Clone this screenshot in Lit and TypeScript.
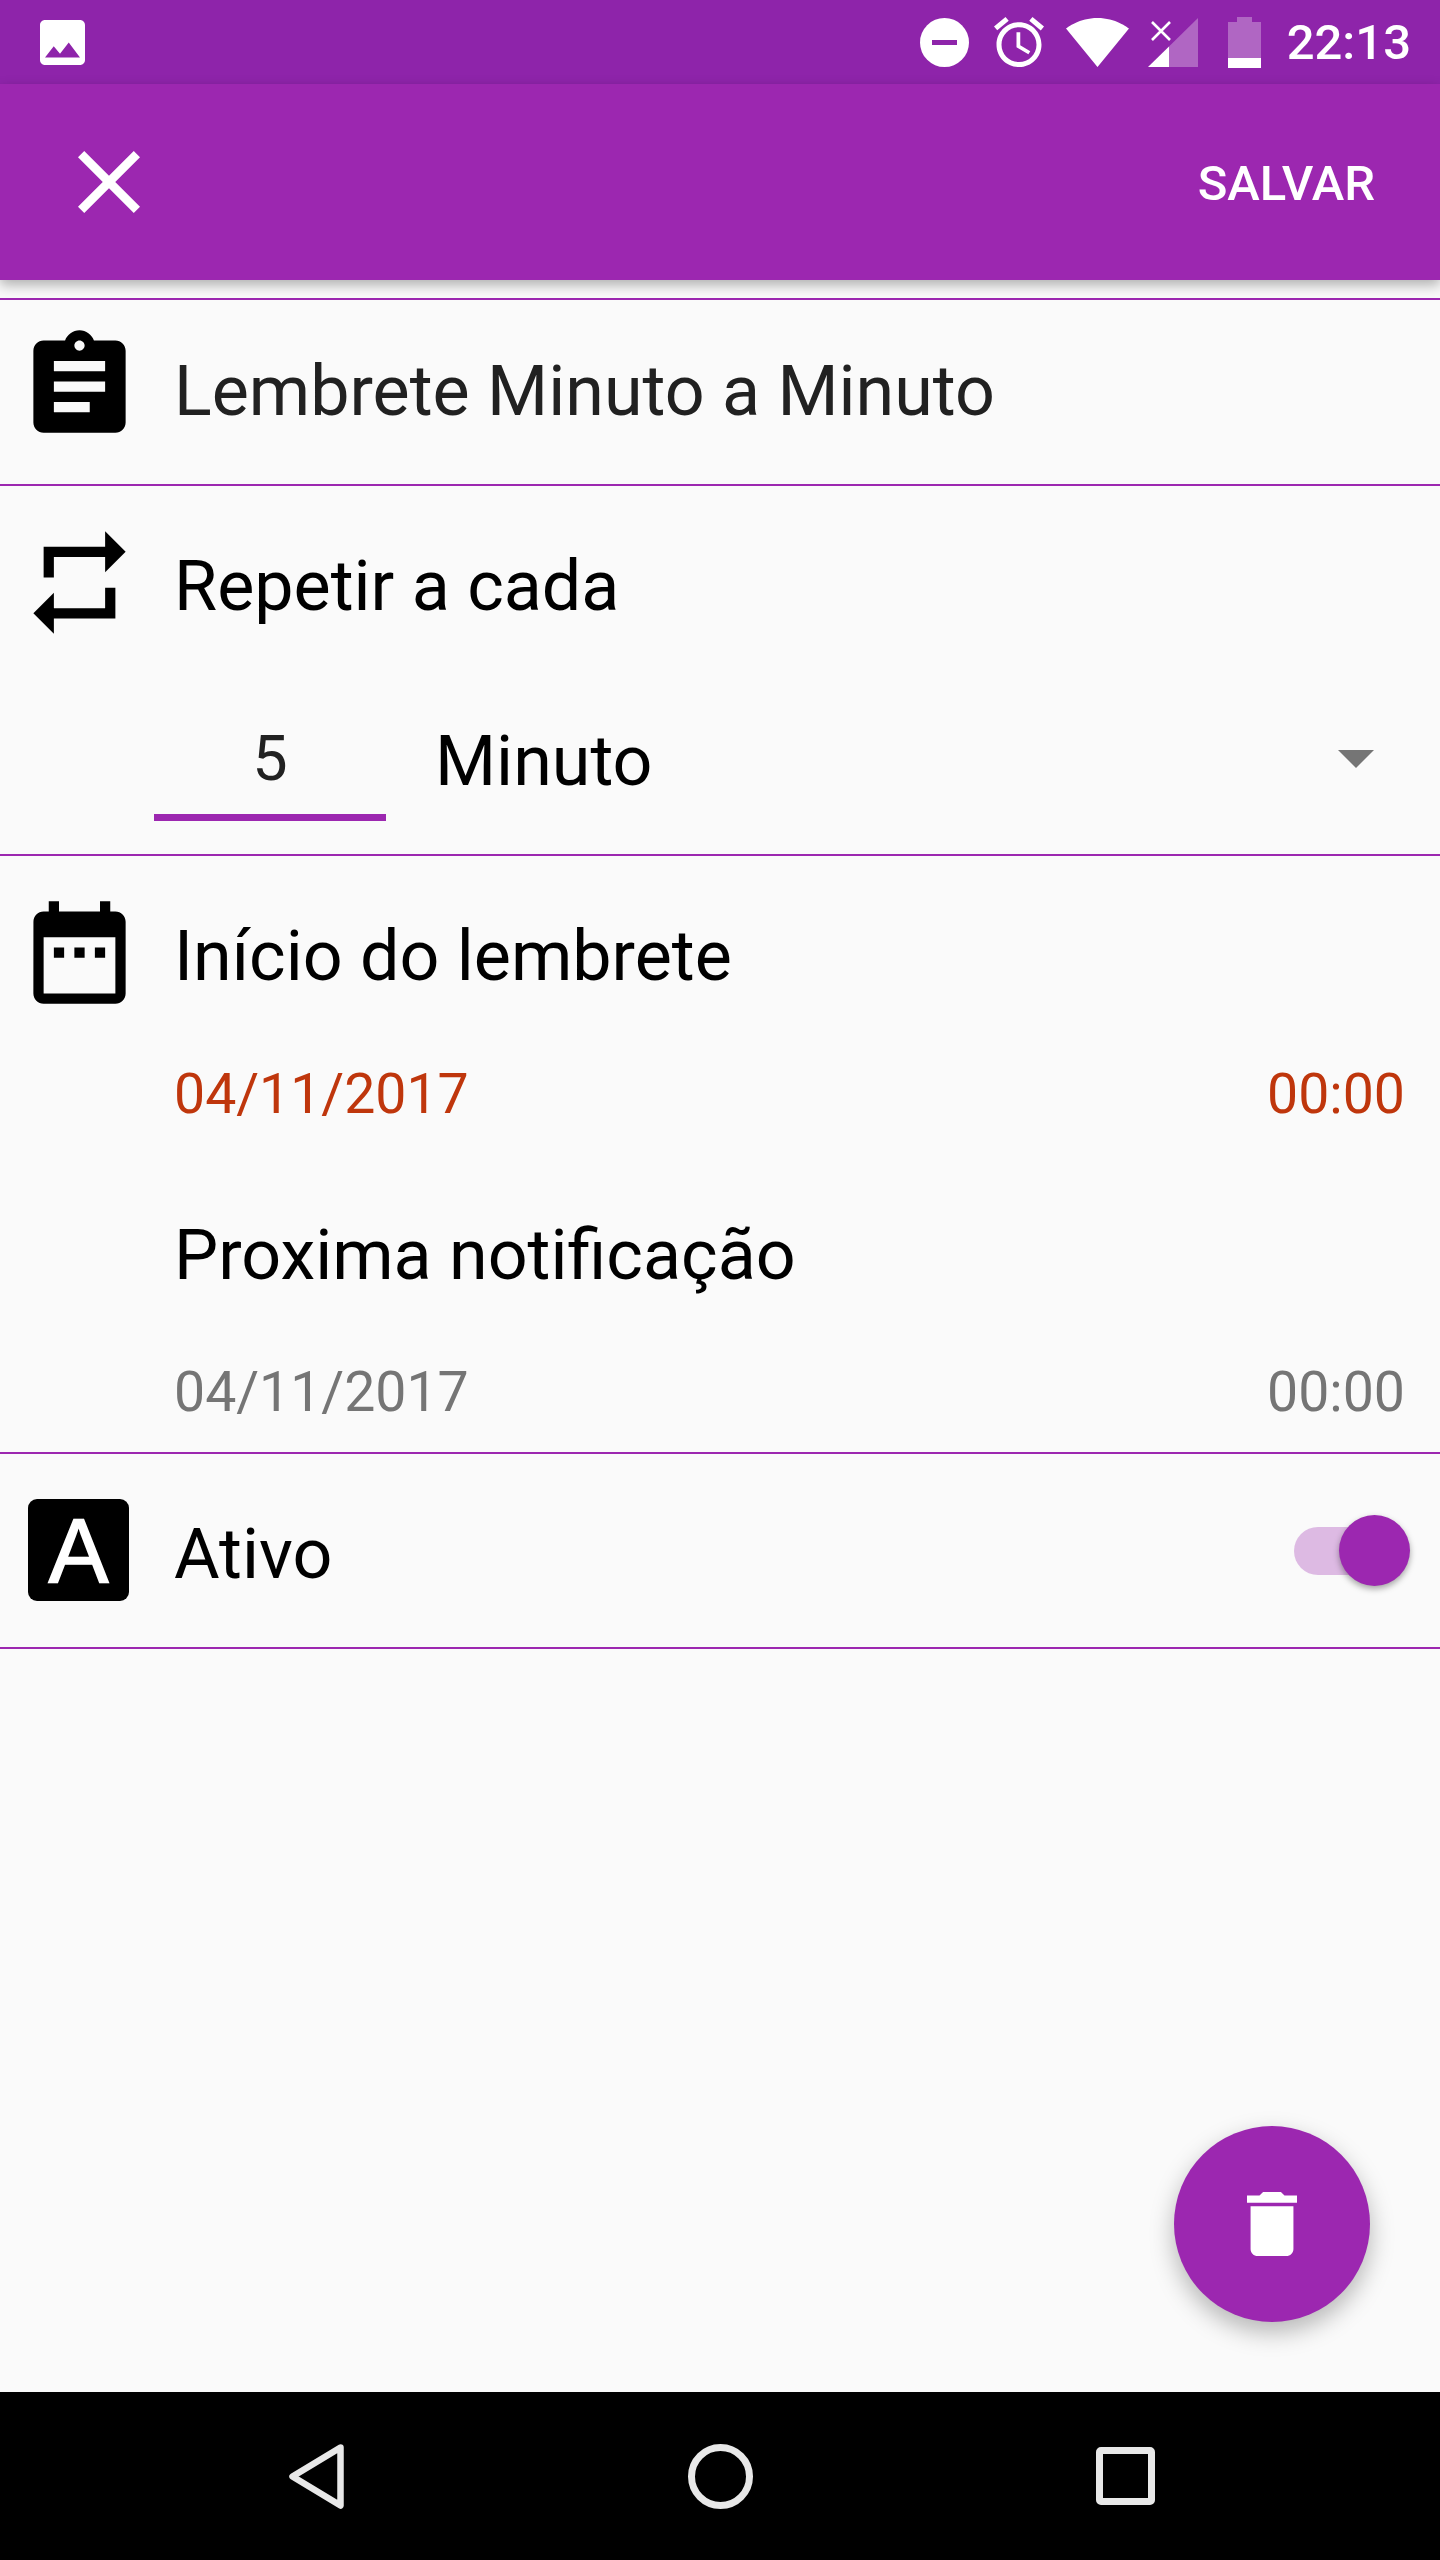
import { LitElement, css, html, svg } from 'lit'
import { customElement } from 'lit/decorators.js'

const icon = (d: string, viewBox: string, w: number, h: number, cls = '') => html`
  <svg class=${cls} width=${w} height=${h} viewBox=${viewBox} preserveAspectRatio="none" fill="currentColor">
    ${svg`<path fill-rule="evenodd" d=${d}></path>`}
  </svg>`

const ASSIGNMENT = 'M19 3h-4.18C14.4 1.84 13.3 1 12 1c-1.3 0-2.4.84-2.82 2H5c-1.1 0-2 .9-2 2v14c0 1.1.9 2 2 2h14c1.1 0 2-.9 2-2V5c0-1.1-.9-2-2-2zm-7 0c.55 0 1 .45 1 1s-.45 1-1 1-1-.45-1-1 .45-1 1-1zm2 14H7v-2h7v2zm3-4H7v-2h10v2zm0-4H7V7h10v2z'
const REPEAT = 'M7 7h10v3l4-4-4-4v3H5v6h2V7zm10 10H7v-3l-4 4 4 4v-3h12v-6h-2v4z'
const CALENDAR = 'M9 11H7v2h2v-2zm4 0h-2v2h2v-2zm4 0h-2v2h2v-2zm2-7h-1V2h-2v2H8V2H6v2H5c-1.11 0-1.99.9-1.99 2L3 20c0 1.1.89 2 2 2h14c1.1 0 2-.9 2-2V6c0-1.1-.9-2-2-2zm0 16H5V9h14v11z'
const IMAGE = 'M21 19V5c0-1.1-.9-2-2-2H5c-1.1 0-2 .9-2 2v14c0 1.1.9 2 2 2h14c1.1 0 2-.9 2-2zM8.5 13.5l2.5 3.01L14.5 12l4.5 6H5l3.5-4.5z'
const ALARM = 'M22 5.72l-4.6-3.86-1.29 1.53 4.6 3.86L22 5.72zM7.88 3.39L6.6 1.86 2 5.71l1.29 1.53 4.59-3.85zM12.5 8H11v6l4.75 2.85.75-1.23-4-2.37V8zM12 4c-4.97 0-9 4.03-9 9s4.03 9 9 9 9-4.03 9-9-4.03-9-9-9zm0 16c-3.87 0-7-3.13-7-7s3.13-7 7-7 7 3.13 7 7-3.13 7-7 7z'
const WIFI = 'M12.01 21.49L23.64 7c-.45-.34-4.93-4-11.64-4C5.28 3 .81 6.66.36 7l11.63 14.49.01.01.01-.01z'
const CLOSE = 'M19 6.41L17.59 5 12 10.59 6.41 5 5 6.41 10.59 12 5 17.59 6.41 19 12 13.41 17.59 19 19 17.59 13.41 12z'
const TRASH = 'M6 19c0 1.1.9 2 2 2h8c1.1 0 2-.9 2-2V7H6v12zM19 4h-3.5l-1-1h-5l-1 1H5v2h14V4z'

@customElement('app-root')
export default class AppRoot extends LitElement {
  private _statusBar() {
    return html`
      <div class="status">
        ${icon(IMAGE, '3 3 18 18', 45, 45)}
        <span class="spacer"></span>
        <svg class="dnd" width="49" height="49" viewBox="0 0 49 49">
          <circle cx="24.5" cy="24.5" r="24.5" fill="#fff"></circle>
          <rect x="12" y="22" width="25" height="5" fill="#8e24aa"></rect>
        </svg>
        ${icon(ALARM, '2 1.86 20 20.14', 50, 50, 'alarm')}
        ${icon(WIFI, '0.36 3 23.28 18.5', 63, 49, 'wifi')}
        <svg class="signal" width="50" height="49" viewBox="0 0 50 49">
          <polygon points="21,28.4 50,0 50,49 21,49" fill="#fff" fill-opacity="0.3"></polygon>
          <polygon points="0,49 21,28.4 21,49" fill="#fff"></polygon>
          <path d="M4 4L22 22M22 4L4 22" stroke="#fff" stroke-width="2.6" fill="none"></path>
        </svg>
        <svg class="battery" width="33" height="51" viewBox="0 0 33 51">
          <path d="M9 0h15v5h9v36H0V5h9z" fill="#fff" fill-opacity="0.3"></path>
          <rect y="41" width="33" height="10" fill="#fff"></rect>
        </svg>
        <span class="time">22:13</span>
      </div>
    `
  }

  private _navBar() {
    return html`
      <div class="nav">
        <svg class="back" width="56" height="65" viewBox="0 0 56 65">
          <path d="M52.5 3.5L4.5 32.5 52.5 61.5z" fill="none" stroke="#e8e8e8" stroke-width="6.5" stroke-linejoin="round"></path>
        </svg>
        <svg class="home" width="65" height="65" viewBox="0 0 65 65">
          <circle cx="32.5" cy="32.5" r="29" fill="none" stroke="#e8e8e8" stroke-width="7"></circle>
        </svg>
        <svg class="recent" width="59" height="58" viewBox="0 0 59 58">
          <rect x="3.5" y="3.5" width="52" height="51" rx="1.5" fill="none" stroke="#e8e8e8" stroke-width="7"></rect>
        </svg>
      </div>
    `
  }

  render() {
    return html`
      ${this._statusBar()}
      <div class="toolbar">
        ${icon(CLOSE, '5 5 14 14', 62, 62)}
        <span class="save">SALVAR</span>
      </div>
      <main>
        <section class="first title-section">
          ${icon(ASSIGNMENT, '0 0 24 24', 123, 123, 'lead assignment')}
          <span class="label name">Lembrete Minuto a Minuto</span>
        </section>

        <section class="repeat">
          <div class="repeat-head">
            ${icon(REPEAT, '0 0 24 24', 123, 123, 'lead')}
            <span class="label">Repetir a cada</span>
          </div>
          <div class="repeat-field">
            <span class="amount">5</span>
            <span class="unit">Minuto</span>
            <svg class="caret" width="36" height="18" viewBox="0 0 36 18"><polygon points="0,0 36,0 18,18" fill="#757575"></polygon></svg>
          </div>
        </section>

        <section class="schedule">
          <div class="schedule-head">
            ${icon(CALENDAR, '0 0 24 24', 123, 123, 'lead')}
            <span class="label">Início do lembrete</span>
          </div>
          <div class="date-row start"><span>04/11/2017</span><span>00:00</span></div>
          <div class="label next">Proxima notificação</div>
          <div class="date-row upcoming"><span>04/11/2017</span><span>00:00</span></div>
        </section>

        <section class="active">
          <span class="letter">A</span>
          <span class="label">Ativo</span>
          <span class="switch"><span class="track"></span><span class="thumb"></span></span>
        </section>

        <button class="fab">${icon(TRASH, '5 3 14 18', 50, 64)}</button>
      </main>
      ${this._navBar()}
    `
  }

  static styles = css`
:host {
  display: flex;
  flex-direction: column;
  height: 2560px;
  background: #fafafa;
  font-family: Roboto, sans-serif;
  color: #000;
}
.status {
  height: 84px;
  flex: none;
  display: flex;
  align-items: center;
  padding: 0 29px 0 40px;
  background: #8e24aa;
  color: #fff;
}
.spacer {
  flex: 1;
}
.alarm { margin-left: 25px; }
.wifi { margin-left: 22px; }
.signal { margin-left: 19px; }
.battery { margin-left: 30px; }
.time {
  margin-left: 26px;
  padding-top: 2px;
  font-size: 49px;
  font-weight: 500;
  line-height: 84px;
}
.toolbar {
  height: 196px;
  flex: none;
  display: flex;
  align-items: center;
  justify-content: space-between;
  padding: 0 65px 0 78px;
  background: #9c27b0;
  color: #fff;
  box-shadow: 0 5px 12px rgba(0, 0, 0, 0.3);
  position: relative;
  z-index: 1;
}
.save {
  padding-top: 2px;
  font-size: 49px;
  font-weight: 500;
}
main {
  flex: 1;
  position: relative;
  padding-top: 18px;
}
section {
  border-bottom: 2px solid #9c27b0;
}
.first {
  border-top: 2px solid #9c27b0;
}
.lead {
  flex: none;
  margin-left: 18px;
  margin-right: 33px;
}
.label {
  font-size: 70px;
  line-height: 120px;
}
.title-section {
  height: 184px;
  display: flex;
  align-items: flex-start;
}
.assignment {
  margin-top: 25px;
}
.name {
  margin-top: 31px;
  color: #212121;
}
.repeat {
  height: 368px;
}
.repeat-head {
  height: 214px;
  display: flex;
  align-items: flex-start;
}
.repeat-head .lead {
  margin-top: 35px;
}
.repeat-head .label {
  margin-top: 40px;
}
.repeat-field {
  display: flex;
  align-items: flex-start;
}
.amount {
  margin-left: 154px;
  width: 232px;
  height: 114px;
  border-bottom: 7px solid #9c27b0;
  text-align: center;
  font-size: 63px;
  line-height: 117px;
  color: #212121;
}
.unit {
  margin-left: 49px;
  font-size: 70px;
  line-height: 122px;
}
.caret {
  margin: 50px 66px 0 auto;
}
.schedule {
  height: 596px;
}
.schedule-head {
  height: 189px;
  display: flex;
  align-items: flex-start;
}
.schedule-head .lead {
  margin-top: 35px;
}
.schedule-head .label {
  margin-top: 40px;
}
.date-row {
  display: flex;
  justify-content: space-between;
  padding: 0 35px 0 174px;
  font-size: 55.4px;
  line-height: 100px;
}
.start {
  color: #bf360c;
}
.upcoming {
  margin-top: 28px;
  color: #757575;
}
.next {
  margin-top: 50px;
  padding-left: 174px;
}
.active {
  height: 193px;
  display: flex;
  align-items: flex-start;
}
.active .label {
  margin-top: 40px;
  margin-left: -2px;
}
.letter {
  flex: none;
  width: 101px;
  height: 102px;
  margin: 45px 47px 0 28px;
  border-radius: 9px;
  background: #000;
  color: #fff;
  font-family: "Liberation Sans", sans-serif;
  font-size: 90px;
  line-height: 104px;
  text-align: center;
  -webkit-text-stroke: 1.5px #fff;
}
.switch {
  position: relative;
  width: 116px;
  height: 71px;
  margin: 61px 30px 0 auto;
}
.track {
  position: absolute;
  left: 0;
  top: 12px;
  width: 100px;
  height: 48px;
  border-radius: 24px;
  background: rgba(156, 39, 176, 0.3);
}
.thumb {
  position: absolute;
  right: 0;
  top: 0;
  width: 71px;
  height: 71px;
  border-radius: 50%;
  background: #9c27b0;
  box-shadow: 0 3px 6px rgba(0, 0, 0, 0.35);
}
.fab {
  position: absolute;
  right: 70px;
  bottom: 70px;
  width: 196px;
  height: 196px;
  padding: 0;
  border: none;
  border-radius: 50%;
  background: #9c27b0;
  color: #fff;
  display: flex;
  align-items: center;
  justify-content: center;
  box-shadow: 0 10px 24px rgba(0, 0, 0, 0.28);
}
.nav {
  height: 168px;
  flex: none;
  display: flex;
  align-items: center;
  padding-left: 288px;
  background: #000;
}
.home {
  margin-left: 344px;
}
.recent {
  margin-left: 343px;
}
`
}

declare global {
  interface HTMLElementTagNameMap {
    'app-root': AppRoot
  }
}
